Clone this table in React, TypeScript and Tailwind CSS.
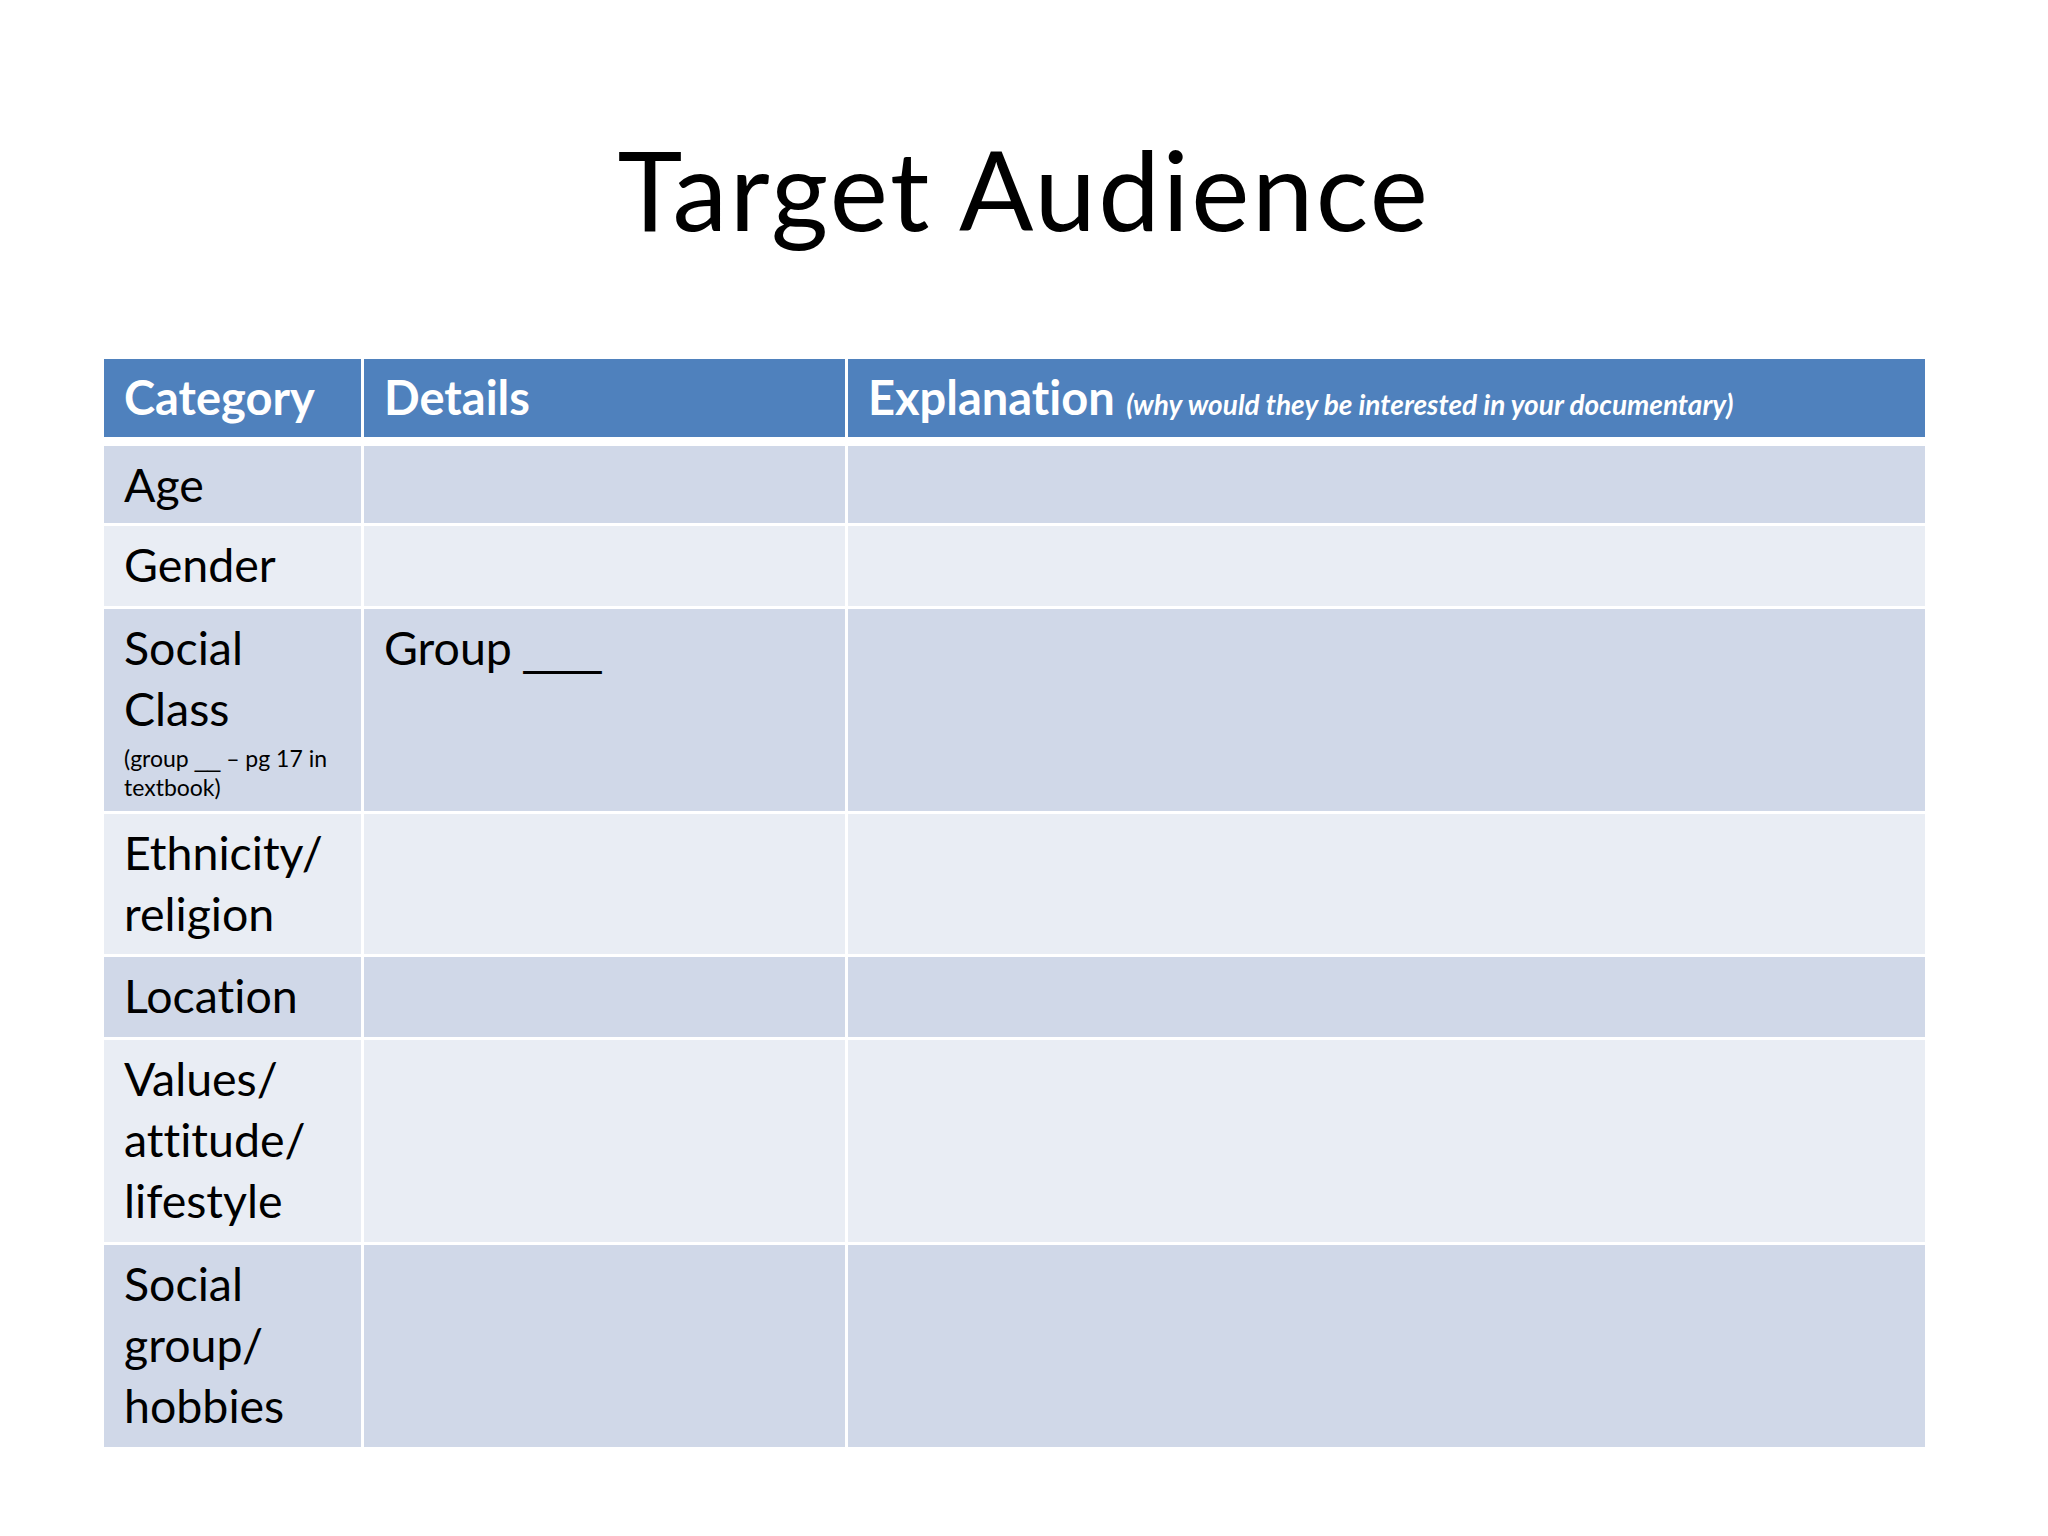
const rows = [
  { label: ["Age"], h: "h-[77px]", dark: true },
  { label: ["Gender"], h: "h-[80px]", dark: false },
  { label: ["Social", "Class"], h: "h-[202px]", dark: true, note: true, details: true },
  { label: ["Ethnicity/", "religion"], h: "h-[140px]", dark: false },
  { label: ["Location"], h: "h-[80px]", dark: true },
  { label: ["Values/", "attitude/", "lifestyle"], h: "h-[202px]", dark: false },
  { label: ["Social", "group/", "hobbies"], h: "h-[202px]", dark: true },
]

// underscores drawn in Liberation Sans so the blank reads as one continuous line
const blank = "font-['Liberation_Sans',sans-serif]"

function App() {
  return (
    <div className="w-[2048px] h-[1536px] bg-white font-['Lato',sans-serif] text-black [font-variant-ligatures:none]">
      {/* slide title */}
      <h1 className="pt-[122px] text-center text-[110px] leading-[132px] font-normal tracking-[2.5px]">
        Target Audience
      </h1>

      <div className="mt-[105px] ml-[104px] w-[1821px] flex flex-col gap-[3px]">
        <div className="grid grid-cols-[257px_481px_1077px] gap-x-[3px] h-[78px] mb-[6px] text-white font-bold text-[47px] leading-[61px]">
          <div className="bg-[#4f81bd] pl-[20px] pt-[8px]">Category</div>
          <div className="bg-[#4f81bd] pl-[20px] pt-[8px]">Details</div>
          <div className="bg-[#4f81bd] pl-[20px] pt-[8px] whitespace-nowrap">
            Explanation{" "}
            <span className="italic text-[28px] font-bold">(why would they be interested in your documentary)</span>
          </div>
        </div>

        {rows.map((r) => {
          const bg = r.dark ? "bg-[#d0d8e8]" : "bg-[#e9edf4]"
          return (
            <div key={r.label.join()} className={`grid grid-cols-[257px_481px_1077px] gap-x-[3px] ${r.h} text-[46.5px] leading-[61px]`}>
              <div className={`${bg} pl-[20px] pt-[8px]`}>
                {r.label.map((l) => (
                  <div key={l}>{l}</div>
                ))}
                {r.note && (
                  <div className="mt-[5px] text-[23px] leading-[28px]">
                    (group <span className={blank}>__</span> – pg 17 in
                    <br />
                    textbook)
                  </div>
                )}
              </div>
              <div className={`${bg} pl-[20px] pt-[8px]`}>
                {r.details && (
                  <>
                    Group <span className={blank}>___</span>
                  </>
                )}
              </div>
              <div className={bg}></div>
            </div>
          )
        })}
      </div>
    </div>
  )
}

export default App
